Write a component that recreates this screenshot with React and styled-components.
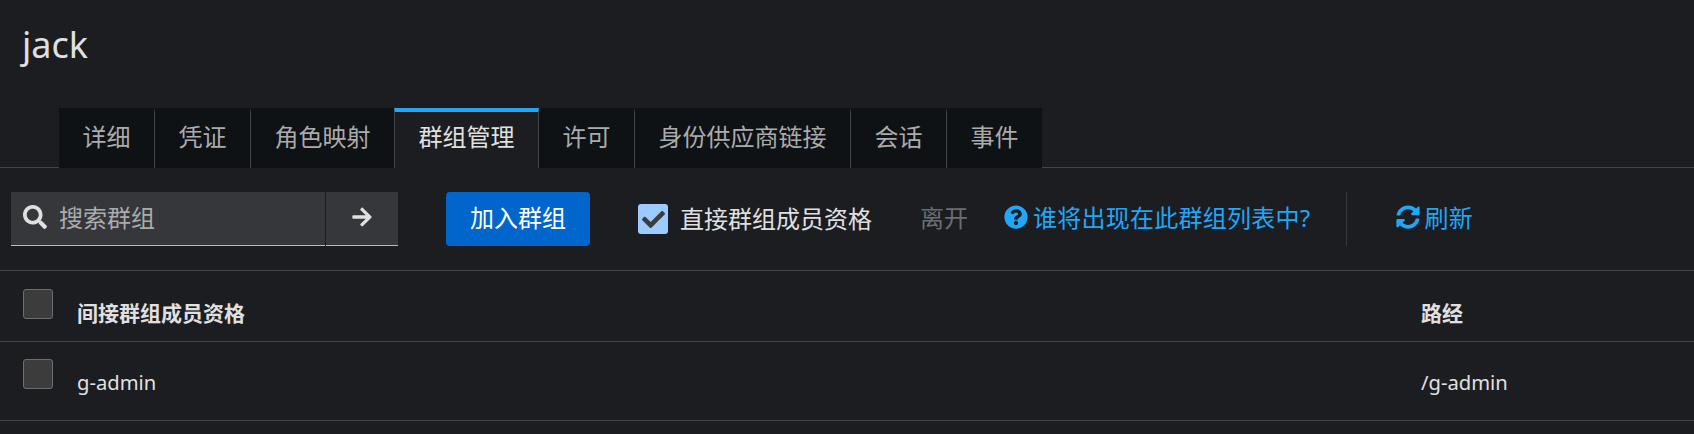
import React from 'react'
import styled, { createGlobalStyle } from 'styled-components'
import { FaSearch, FaArrowRight, FaCheck, FaQuestionCircle, FaSyncAlt } from 'react-icons/fa'

const tabs = ['详细', '凭证', '角色映射', '群组管理', '许可', '身份供应商链接', '会话', '事件']

const GlobalStyle = createGlobalStyle`
    html, body {
        margin: 0;
        height: 100%;
        background: #1b1d21;
    }
    body {
        font-family: "Noto Sans", "Noto Sans CJK SC", sans-serif;
        color: #e0e0e0;
    }
`

const Page = styled.div`
    height: 434px;
    overflow: hidden;
    background: #1b1d21;
`
const Title = styled.h1`
    margin: 0;
    padding: 21px 0 0 22px;
    height: 108px;
    box-sizing: border-box;
    font-size: 36px;
    line-height: 48px;
    font-weight: 400;
    color: #e0e0e0;
`
const TabBar = styled.div`
    display: flex;
    height: 59px;
    padding-left: 59px;
    border-bottom: 1px solid #444548;
`
const Tab = styled.div`
    display: flex;
    align-items: center;
    padding: 0 23.5px 10px;
    box-sizing: border-box;
    font-size: 24px;
    color: ${p => (p.$active ? '#e0e0e0' : '#aaabac')};
    background: ${p => (p.$active ? '#1b1d21' : '#0f1214')};
    border-right: 1px solid #444548;
    border-top: 4px solid ${p => (p.$active ? '#1fa7f8' : '#0f1214')};
    border-left: ${p => (p.$active ? '1px solid #444548' : 'none')};
    margin-left: ${p => (p.$active ? '-1px' : '0')};
    height: 60px;

    &:last-child {
        border-right: none;
    }
`
const Toolbar = styled.div`
    display: flex;
    align-items: center;
    height: 103px;
    padding: 24px 0 24px 11px;
    box-sizing: border-box;
    border-bottom: 1px solid #444548;
`
const SearchGroup = styled.div`
    display: flex;
    width: 387px;
    height: 54px;
    flex-shrink: 0;
`
const SearchField = styled.div`
    display: flex;
    align-items: center;
    gap: 12px;
    flex: 1;
    min-width: 0;
    padding: 0 0 3px 12px;
    background: #36373b;
    border-bottom: 1.5px solid #b8bbbe;
    margin-right: 1px;
    color: #e0e0e0;
    font-size: 24px;
`
const SearchInput = styled.input`
    flex: 1;
    min-width: 0;
    padding: 0;
    border: none;
    outline: none;
    background: transparent;
    font: inherit;
    color: #e0e0e0;

    &::placeholder {
        color: #aaabac;
        opacity: 1;
    }
`
const SearchButton = styled.div`
    display: flex;
    align-items: center;
    justify-content: center;
    width: 72px;
    padding-bottom: 3px;
    flex-shrink: 0;
    background: #36373b;
    border-bottom: 1.5px solid #b8bbbe;
    color: #e0e0e0;
    font-size: 22px;
`
const PrimaryButton = styled.button`
    height: 54px;
    width: 144px;
    margin-left: 48px;
    padding: 0 0 6px;
    border: none;
    border-radius: 4px;
    background: #06c;
    color: #fff;
    font: inherit;
    font-size: 24px;
    flex-shrink: 0;
`
const CheckField = styled.label`
    display: flex;
    align-items: center;
    gap: 12px;
    margin-left: 48px;
    font-size: 24px;
    line-height: 34px;
    color: #e0e0e0;
`
const Box = styled.span`
    display: flex;
    align-items: center;
    justify-content: center;
    width: 30px;
    height: 30px;
    box-sizing: border-box;
    border-radius: 3px;
    flex-shrink: 0;
    background: ${p => (p.$checked ? '#9ecbff' : '#3c3c3c')};
    border: ${p => (p.$checked ? 'none' : '1.5px solid #6a6e73')};
    color: #3c3c3c;
    font-size: 23px;
`
const LeaveButton = styled.span`
    margin: 0 0 6px 48px;
    font-size: 24px;
    color: #6a6e73;
`
const LinkButton = styled.span`
    display: flex;
    align-items: center;
    margin-left: ${p => p.$offset}px;
    padding-bottom: 5px;
    gap: ${p => p.$gap}px;
    font-size: 24px;
    letter-spacing: 0.25px;
    color: #1fa7f8;
`
const Separator = styled.div`
    width: 1px;
    height: 54px;
    margin-left: 36px;
    background: #36373b;
`
const Table = styled.table`
    width: 100%;
    border-collapse: collapse;
    table-layout: fixed;
`
const HeadRow = styled.tr`
    height: 70px;
    border-bottom: 1px solid #444548;
`
const BodyRow = styled.tr`
    height: 79px;
    border-bottom: 1px solid #444548;
`
const CheckCell = styled.td`
    padding: ${p => (p.$head ? '18px' : '17px')} 0 0 23px;
    box-sizing: border-box;
    vertical-align: top;
`
const HeadCell = styled.th`
    padding: 30px 0 0;
    text-align: left;
    vertical-align: top;
    font-size: 21px;
    line-height: 24px;
    font-weight: 700;
    color: #e0e0e0;
`
const Cell = styled.td`
    padding: 26px 0 0;
    vertical-align: top;
    font-size: 20.2px;
    line-height: 28px;
    color: #e0e0e0;
`

export default function App() {
    return (
        <Page>
            <GlobalStyle />
            <Title>jack</Title>
            <TabBar>
                {tabs.map(t => (
                    <Tab key={t} $active={t === '群组管理'}>{t}</Tab>
                ))}
            </TabBar>
            <Toolbar>
                <SearchGroup>
                    <SearchField>
                        <FaSearch />
                        <SearchInput placeholder="搜索群组" />
                    </SearchField>
                    <SearchButton><FaArrowRight /></SearchButton>
                </SearchGroup>
                <PrimaryButton>加入群组</PrimaryButton>
                <CheckField>
                    <Box $checked><FaCheck /></Box>
                    直接群组成员资格
                </CheckField>
                <LeaveButton>离开</LeaveButton>
                <LinkButton $offset={36} $gap={5}>
                    <FaQuestionCircle />
                    谁将出现在此群组列表中?
                </LinkButton>
                <Separator />
                <LinkButton $offset={49} $gap={4}>
                    <FaSyncAlt />
                    刷新
                </LinkButton>
            </Toolbar>
            <Table>
                <colgroup>
                    <col style={{ width: 77 }} />
                    <col style={{ width: 1344 }} />
                    <col />
                </colgroup>
                <thead>
                    <HeadRow>
                        <CheckCell as="th" $head><Box /></CheckCell>
                        <HeadCell>间接群组成员资格</HeadCell>
                        <HeadCell>路经</HeadCell>
                    </HeadRow>
                </thead>
                <tbody>
                    <BodyRow>
                        <CheckCell><Box /></CheckCell>
                        <Cell>g-admin</Cell>
                        <Cell>/g-admin</Cell>
                    </BodyRow>
                </tbody>
            </Table>
        </Page>
    )
}
